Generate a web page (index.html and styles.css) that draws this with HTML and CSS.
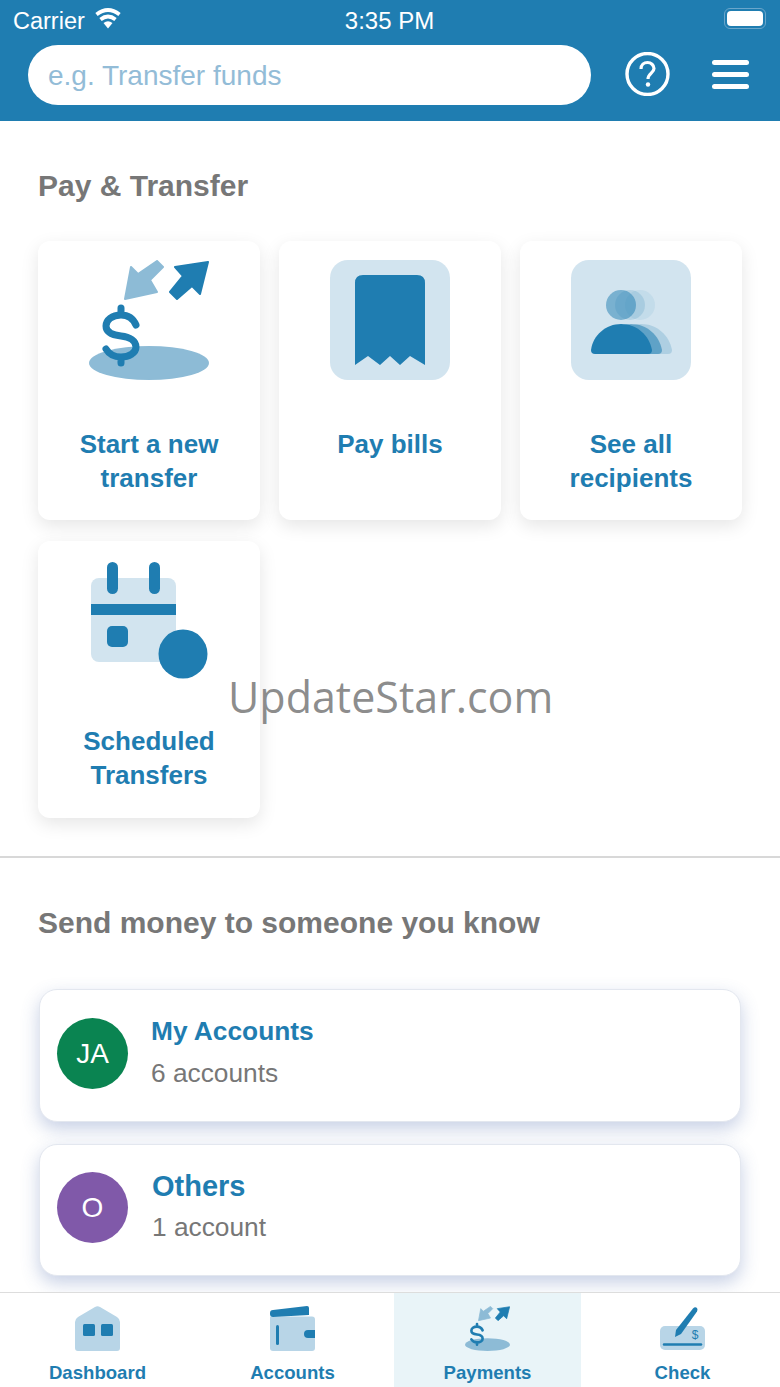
FILE: index.html
```html
<!DOCTYPE html>
<html lang="en">
<head>
<meta charset="utf-8">
<title>Pay &amp; Transfer</title>
<link rel="stylesheet" href="styles.css">
</head>
<body>
<svg class="defs" width="0" height="0">
  <symbol id="transfer-icon" viewBox="0 0 120 120">
    <ellipse cx="60" cy="103" rx="60" ry="17" fill="#8dbbd6"/>
    <path d="M47 65C44 58 38 55 32 55C23 55 17 60 17 66C17 72 23 75 32 76C41 77 47 81 47 87C47 93 40 97 32 97C25 97 20 94 17 89M32 48V55M32 97V103" fill="none" stroke="#1f7db1" stroke-width="7" stroke-linecap="round"/>
    <path d="M36 39L42 7L49 14L68 1L74 7L61 20L68 32Z" fill="#8dbbd6" stroke="#8dbbd6" stroke-width="2" stroke-linejoin="round"/>
    <path d="M119 2L86 7L94 16L81 32L88 39L103 26L111 34Z" fill="#1f7db1" stroke="#1f7db1" stroke-width="2" stroke-linejoin="round"/>
  </symbol>
</svg>

<div class="phone">
  <header class="topbar">
    <div class="status">
      <div class="status-left">
        <span>Carrier</span>
        <svg class="wifi" width="28" height="21" viewBox="0 0 28 21">
          <path d="M14 20.500L9.500 15Q14 11.500 18.500 15Z" fill="#fff"/>
          <path d="M6.500 11.500Q14 5.500 21.500 11.500M2.500 6.500Q14 -2.500 25.500 6.500" fill="none" stroke="#fff" stroke-width="3.800"/>
        </svg>
      </div>
      <div class="status-time">3:35 PM</div>
      <div class="status-right">
        <div class="battery"><div class="battery-fill"></div></div>
      </div>
    </div>
    <div class="searchrow">
      <div class="search">e.g. Transfer funds</div>
      <svg class="help" width="45" height="44" viewBox="0 0 45 44">
        <circle cx="22.500" cy="22" r="20.500" fill="none" stroke="#fff" stroke-width="3.400"/>
        <path d="M16 17C16 13 19 10.500 22.500 10.500C26 10.500 29 13 29 16.500C29 21 23 21.500 23 27" fill="none" stroke="#fff" stroke-width="3.200"/>
        <circle cx="23" cy="32.500" r="2.200" fill="#fff"/>
      </svg>
      <div class="burger"><i></i><i></i><i></i></div>
    </div>
  </header>

  <main class="content">
    <section class="pay">
      <h2 class="title">Pay &amp; Transfer</h2>
      <div class="cards">
        <a class="card">
          <svg class="card-icon" width="120" height="120"><use href="#transfer-icon"/></svg>
          <span class="card-label">Start a new<br>transfer</span>
        </a>
        <a class="card">
          <svg class="card-icon" width="120" height="120" viewBox="0 0 120 120">
            <rect width="120" height="120" rx="18" fill="#d2e4ef"/>
            <path d="M25 105V23Q25 15 33 15H87Q95 15 95 23V105L80 96L70 105L60 96L50 105L38 96Z" fill="#1f7db1"/>
          </svg>
          <span class="card-label">Pay bills</span>
        </a>
        <a class="card">
          <svg class="card-icon" width="120" height="120" viewBox="0 0 120 120">
            <rect width="120" height="120" rx="18" fill="#d2e4ef"/>
            <circle cx="69" cy="45" r="15" fill="#1f7db1" opacity=".08"/>
            <circle cx="59" cy="45" r="15" fill="#1f7db1" opacity=".16"/>
            <circle cx="50" cy="45" r="15" fill="#1f7db1" opacity=".5"/>
            <path d="M40 90C42 75 55 64 70 64C86 64 98 75 101 90Q101 94 97 94H44Q40 94 40 90Z" fill="#1f7db1" opacity=".2"/>
            <path d="M30 90C32 75 45 64 60 64C76 64 88 75 91 90Q91 94 87 94H34Q30 94 30 90Z" fill="#1f7db1" opacity=".55"/>
            <path d="M20 90C22 75 35 64 50 64C66 64 78 75 81 90Q81 94 77 94H24Q20 94 20 90Z" fill="#1f7db1"/>
          </svg>
          <span class="card-label">See all<br>recipients</span>
        </a>
        <a class="card card-low">
          <svg class="card-icon" width="120" height="120" viewBox="0 0 120 120">
            <rect x="2" y="18" width="85" height="84" rx="8" fill="#d2e4ef"/>
            <rect x="2" y="44" width="85" height="11" fill="#1f7db1"/>
            <rect x="18" y="2" width="11" height="32" rx="5.500" fill="#1f7db1"/>
            <rect x="60" y="2" width="11" height="32" rx="5.500" fill="#1f7db1"/>
            <rect x="18" y="66" width="21" height="21" rx="5" fill="#1f7db1"/>
            <circle cx="94" cy="94" r="24.500" fill="#1f7db1"/>
          </svg>
          <span class="card-label">Scheduled<br>Transfers</span>
        </a>
      </div>
    </section>

    <section class="send">
      <h2 class="title">Send money to someone you know</h2>
      <div class="rows">
        <a class="row">
          <div class="avatar avatar-green">JA</div>
          <div class="row-text">
            <div class="row-name">My Accounts</div>
            <div class="row-sub">6 accounts</div>
          </div>
        </a>
        <a class="row row-others">
          <div class="avatar avatar-purple">O</div>
          <div class="row-text">
            <div class="row-name">Others</div>
            <div class="row-sub">1 account</div>
          </div>
        </a>
      </div>
    </section>
  </main>

  <nav class="tabs">
    <a class="tab">
      <svg width="45" height="45" viewBox="0 0 45 45">
        <path d="M20 1Q22.500 -0.500 25 1L42 11Q45 13 45 16V42Q45 45 42 45H3Q0 45 0 42V16Q0 13 3 11Z" fill="#b8d5e7"/>
        <rect x="8" y="18" width="12" height="12" rx="1.500" fill="#1f7db1"/>
        <rect x="26" y="18" width="12" height="12" rx="1.500" fill="#1f7db1"/>
      </svg>
      <span>Dashboard</span>
    </a>
    <a class="tab">
      <svg width="45" height="45" viewBox="0 0 45 45">
        <path d="M3 10.500H42Q45 10.500 45 13.500V42Q45 45 42 45H3Q0 45 0 42V10.500Z" fill="#b8d5e7"/>
        <path d="M3 4L37 0Q39 0 39 2V9L3 11Q0 11 0 8V7Q0 4 3 4Z" fill="#1f7db1"/>
        <rect x="6" y="19" width="3" height="20" rx="1.500" fill="#1f7db1"/>
        <path d="M45 24H38Q34 24 34 28Q34 32 38 32H45Z" fill="#1f7db1"/>
      </svg>
      <span>Accounts</span>
    </a>
    <a class="tab tab-on">
      <svg width="45" height="45"><use href="#transfer-icon"/></svg>
      <span>Payments</span>
    </a>
    <a class="tab">
      <svg width="45" height="45" viewBox="0 0 45 45">
        <rect y="20" width="45" height="24" rx="5" fill="#b8d5e7"/>
        <path d="M4 38.500H41" stroke="#1f7db1" stroke-width="2.500" stroke-linecap="round"/>
        <path d="M33 2.500Q35 0.500 37 2Q38 3.500 37 5.500L21 28L15 31L16 24Z" fill="#1f7db1"/>
        <text class="check-dollar" x="35" y="33" text-anchor="middle">$</text>
      </svg>
      <span>Check</span>
    </a>
  </nav>

  <div class="watermark">UpdateStar.com</div>
</div>
</body>
</html>
```

FILE: styles.css
```css
* { box-sizing: border-box; }

body {
  margin: 0;
  background: #fff;
  font-family: "Liberation Sans", Arial, sans-serif;
}

.defs { position: absolute; }

.phone {
  position: relative;
  width: 780px;
  height: 1387px;
  display: flex;
  flex-direction: column;
  overflow: hidden;
}

/* top bar */
.topbar {
  height: 121px;
  flex: none;
  background: #1f7db1;
  color: #fff;
}
.status {
  height: 45px;
  padding: 8px 14px 0 13px;
  display: grid;
  grid-template-columns: 1fr auto 1fr;
  font-size: 23.500px;
  line-height: 26px;
}
.status-left {
  display: flex;
  gap: 9px;
  align-items: flex-start;
}
.status-time { font-size: 24px; }
.status-right {
  display: flex;
  justify-content: flex-end;
}
.battery {
  width: 42px;
  height: 21px;
  padding: 2px;
  border: 1px solid #6aa6cb;
  border-radius: 6px;
}
.battery-fill {
  height: 100%;
  background: #fff;
  border-radius: 4px;
}
.searchrow {
  display: flex;
  align-items: center;
  padding-left: 28px;
}
.search {
  width: 563px;
  height: 60px;
  padding: 2px 0 0 20px;
  background: #fff;
  border-radius: 30px;
  color: #93bcd7;
  font-size: 28px;
  line-height: 58px;
}
.help { margin-left: 34px; margin-top: -2px; }
.burger {
  width: 37px;
  margin-left: 42px;
  margin-top: -2px;
  display: flex;
  flex-direction: column;
  gap: 7px;
}
.burger i {
  height: 5px;
  background: #fff;
  border-radius: 3px;
}

/* main */
.content {
  flex: 1;
  overflow: hidden;
}
.title {
  margin: 0;
  color: #777;
  font-size: 30px;
  line-height: 34px;
  font-weight: bold;
}
.pay {
  padding: 48px 38px 38px;
  border-bottom: 2px solid #d8d8d8;
}
.cards {
  margin-top: 38px;
  display: grid;
  grid-template-columns: repeat(3, 222px);
  grid-template-rows: 279px 277px;
  column-gap: 19px;
  row-gap: 21px;
}
.card {
  display: flex;
  flex-direction: column;
  align-items: center;
  padding-top: 19px;
  background: #fff;
  border-radius: 12px;
  box-shadow: 0 6px 18px rgba(0, 0, 0, .1);
}
.card-label {
  margin-top: 47px;
  color: #1f7db1;
  font-size: 26px;
  line-height: 34px;
  font-weight: bold;
  text-align: center;
}
.card-low .card-label { margin-top: 44px; }

.send { padding: 48px 38px 0; }
.rows {
  margin-top: 49px;
  padding: 0 1px;
  display: flex;
  flex-direction: column;
  gap: 22px;
}
.row {
  height: 133px;
  padding: 26px 0 0 17px;
  display: flex;
  gap: 23px;
  align-items: flex-start;
  background: #fff;
  border: 1px solid #e3e7ef;
  border-radius: 18px;
  box-shadow: 0 7px 18px rgba(70, 100, 170, .3);
}
.avatar {
  width: 71px;
  height: 71px;
  margin-top: 2px;
  border-radius: 50%;
  color: #fff;
  font-size: 28px;
  line-height: 71px;
  text-align: center;
}
.avatar-green { background: #0a8451; }
.avatar-purple { background: #8059a9; }
.row-name {
  color: #1f7db1;
  font-size: 26.300px;
  line-height: 30px;
  font-weight: bold;
}
.row-sub {
  margin-top: 12px;
  color: #777;
  font-size: 26.300px;
  line-height: 30px;
}
.row-others { height: 132px; gap: 24px; }
.row-others .avatar { margin-top: 1px; }
.row-others .row-name { font-size: 29px; }
.row-others .row-sub { margin-top: 11px; }

/* bottom tabs */
.tabs {
  height: 95px;
  flex: none;
  position: relative;
  display: grid;
  grid-template-columns: repeat(4, 195px);
  background: #fff;
  border-top: 1px solid #ddd;
}
.tab {
  padding-top: 13px;
  display: flex;
  flex-direction: column;
  align-items: center;
  gap: 11px;
  color: #1f7db1;
  font-size: 18.600px;
  line-height: 21px;
  font-weight: bold;
}
.tab-on {
  margin: 0 4px;
  background: #e9f4f8;
}
.check-dollar {
  fill: #1f7db1;
  font-size: 12px;
  font-weight: normal;
}

.watermark {
  position: absolute;
  left: 228px;
  top: 667px;
  color: rgba(120, 120, 120, .85);
  font-family: "Open Sans", sans-serif;
  font-size: 43px;
  line-height: 60px;
}
```
